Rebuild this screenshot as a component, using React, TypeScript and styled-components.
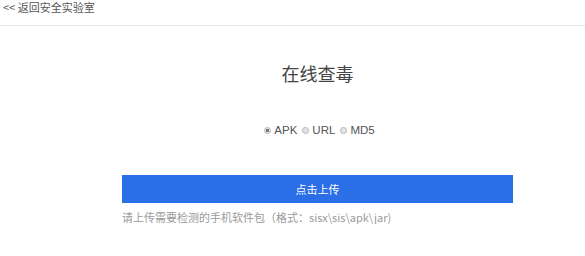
import { useState } from 'react';
import styled, { createGlobalStyle } from 'styled-components';

// Page reset and base font
const GlobalStyle = createGlobalStyle`
  html, body {
    margin: 0;
    padding: 0;
    background: #ffffff;
    font-family: "Microsoft YaHei", "Noto Sans CJK SC", "Liberation Sans", sans-serif;
  }
`;

// Top bar with the back link
const TopBar = styled.div`
  height: 26px;
  padding: 0 0 0 3px;
  border-bottom: 1px solid #e6e6e6;
  box-sizing: border-box;
  font-size: 11px;
  line-height: 14px;
`;

const BackLink = styled.a`
  font-size: 11px;
  line-height: 14px;
  color: #555555;
  text-decoration: none;
  cursor: pointer;
`;

// Centered column holding the scanner form
const Main = styled.div`
  width: 391px;
  margin-left: 122px;
  display: flex;
  flex-direction: column;
  align-items: center;
`;

const Title = styled.h1`
  margin: 35px 0 0;
  font-size: 18px;
  font-weight: normal;
  line-height: 24px;
  color: #444444;
`;

const RadioGroup = styled.div`
  margin-top: 39px;
  padding-left: 4px;
  display: flex;
  align-items: center;
  gap: 5px;
  font-family: "Liberation Sans", Arial, sans-serif;
  font-size: 11.5px;
  color: #555555;
`;

const RadioLabel = styled.label`
  display: flex;
  align-items: center;
  gap: 3px;
  cursor: pointer;
`;

const RadioDot = styled.span<{ $checked: boolean }>`
  width: 7px;
  height: 7px;
  border-radius: 50%;
  box-sizing: border-box;
  border: 1px solid #b5b5b5;
  background: ${(p) => (p.$checked ? 'radial-gradient(circle, #777 0 1.6px, #e8e8e8 2px)' : '#e4e4e4')};
`;

const UploadButton = styled.button`
  margin-top: 39px;
  width: 100%;
  height: 28px;
  border: none;
  background: #2a6ee8;
  color: #ffffff;
  font-family: inherit;
  font-size: 11px;
  cursor: pointer;
`;

const Hint = styled.p`
  align-self: flex-start;
  margin: 7px 0 0;
  font-size: 11px;
  line-height: 14px;
  color: #9a9a9a;
`;

const options = ['APK', 'URL', 'MD5'];

const App = () => {
  const [type, setType] = useState('APK');

  return (
    <>
      <GlobalStyle />
      <TopBar>
        <BackLink>&lt;&lt; 返回安全实验室</BackLink>
      </TopBar>
      <Main>
        <Title>在线查毒</Title>
        <RadioGroup>
          {options.map((o) => (
            <RadioLabel key={o} onClick={() => setType(o)}>
              <RadioDot $checked={type === o} />
              {o}
            </RadioLabel>
          ))}
        </RadioGroup>
        <UploadButton>点击上传</UploadButton>
        <Hint>请上传需要检测的手机软件包（格式：sisx\sis\apk\jar)</Hint>
      </Main>
    </>
  );
};

export default App;
